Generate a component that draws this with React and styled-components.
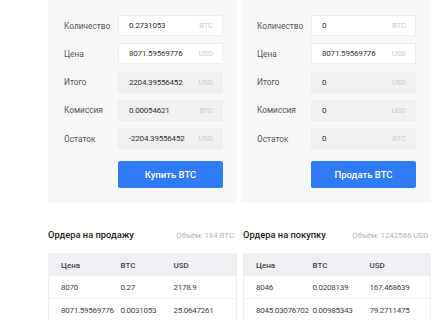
import React from "react";
import styled, { createGlobalStyle } from "styled-components";

const forms = [
  {
    button: "Купить BTC",
    fields: [
      { label: "Количество", value: "0.2731053", unit: "BTC", editable: true },
      { label: "Цена", value: "8071.59569776", unit: "USD", editable: true },
      { label: "Итого", value: "2204.39556452", unit: "USD" },
      { label: "Комиссия", value: "0.00054621", unit: "BTC" },
      { label: "Остаток", value: "-2204.39556452", unit: "USD" },
    ],
  },
  {
    button: "Продать BTC",
    fields: [
      { label: "Количество", value: "0", unit: "BTC", editable: true },
      { label: "Цена", value: "8071.59569776", unit: "USD", editable: true },
      { label: "Итого", value: "0", unit: "USD" },
      { label: "Комиссия", value: "0", unit: "USD" },
      { label: "Остаток", value: "0", unit: "BTC" },
    ],
  },
];

const books = [
  {
    title: "Ордера на продажу",
    volume: "Объём: 184 BTC",
    cols: [60, 53],
    rows: [
      ["8070", "0.27", "2178.9"],
      ["8071.59569776", "0.0031053", "25.0647261"],
    ],
  },
  {
    title: "Ордера на покупку",
    volume: "Объём: 1242586 USD",
    cols: [57, 57],
    rows: [
      ["8046", "0.0208139", "167.468639"],
      ["8045.03076702", "0.00985343", "79.2711475"],
    ],
  },
];

const App = () => {
  return (
    <>
      <GlobalStyle />
      <Page>
        <Forms>
          {forms.map((form) => (
            <Panel key={form.button}>
              {form.fields.map((f) => (
                <Field key={f.label}>
                  <Label>{f.label}</Label>
                  <InputBox $editable={f.editable}>
                    <span>{f.value}</span>
                    <Unit>{f.unit}</Unit>
                  </InputBox>
                </Field>
              ))}
              <Action>{form.button}</Action>
            </Panel>
          ))}
        </Forms>

        <Books>
          {books.map((book) => (
            <Book key={book.title}>
              <BookHead>
                <BookTitle>{book.title}</BookTitle>
                <Volume>{book.volume}</Volume>
              </BookHead>
              <Table>
                <colgroup>
                  <col style={{ width: book.cols[0] }} />
                  <col style={{ width: book.cols[1] }} />
                  <col />
                </colgroup>
                <thead>
                  <tr>
                    <Th>Цена</Th>
                    <Th>BTC</Th>
                    <Th>USD</Th>
                  </tr>
                </thead>
                <tbody>
                  {book.rows.map((r) => (
                    <tr key={r[0]}>
                      {r.map((c, i) => (
                        <Td key={i}>{c}</Td>
                      ))}
                    </tr>
                  ))}
                </tbody>
              </Table>
            </Book>
          ))}
        </Books>
      </Page>
    </>
  );
};

export default App;

const GlobalStyle = createGlobalStyle`
  body {
    margin: 0;
    background: #fff;
    font-family: Roboto, "Noto Sans", sans-serif;
    color: #333;
  }
`;

const Page = styled.div`
  width: 440px;
  height: 320px;
  overflow: hidden;
  padding-left: 48px;
  box-sizing: border-box;
`;

const Forms = styled.div`
  display: grid;
  grid-template-columns: 189px 190px;
  column-gap: 4px;
`;

const Panel = styled.div`
  background: #f7f8f9;
  padding: 15px 14px 15px 16px;
  display: flex;
  flex-direction: column;
  gap: 7.25px;
`;

const Field = styled.div`
  display: grid;
  grid-template-columns: 54px 105px;
  align-items: center;
  height: 21px;
`;

const Label = styled.div`
  font-size: 8.3px;
  color: #555;
`;

const InputBox = styled.div`
  height: 21px;
  box-sizing: border-box;
  display: flex;
  align-items: center;
  justify-content: space-between;
  padding: 0 9px 0 10px;
  font-size: 8px;
  letter-spacing: -0.2px;
  color: #333;
  background: ${(p) => (p.$editable ? "#fff" : "#eef0f2")};
  border: 1px solid ${(p) => (p.$editable ? "#eceef1" : "#eef0f2")};
`;

const Unit = styled.span`
  font-size: 7.5px;
  letter-spacing: 0;
  color: #c9ccd0;
`;

const Action = styled.button`
  margin: 5px 0 0 54px;
  width: 105px;
  height: 27px;
  border: 0;
  border-radius: 2px;
  background: #2e7bf5;
  color: #fff;
  font-family: Roboto, sans-serif;
  font-size: 9.5px;
  font-weight: 500;
`;

const Books = styled.div`
  display: grid;
  grid-template-columns: 189px 188px;
  column-gap: 6px;
  margin-top: 26px;
`;

const Book = styled.div`
  display: flex;
  flex-direction: column;
  gap: 12px;
`;

const BookHead = styled.div`
  display: flex;
  justify-content: space-between;
  align-items: baseline;
  height: 12px;
  padding-right: 3px;
`;

const BookTitle = styled.div`
  font-size: 9.3px;
  font-weight: 500;
  color: #222;
`;

const Volume = styled.div`
  font-size: 7.8px;
  color: #b3b5b8;
`;

const Table = styled.table`
  width: 100%;
  border-collapse: collapse;
  table-layout: fixed;
  border: 1px solid #eef0f2;
`;

const Th = styled.th`
  background: #eef0f3;
  height: 22px;
  padding: 0 0 0 12px;
  text-align: left;
  font-size: 8px;
  font-weight: 500;
  color: #444;
`;

const Td = styled.td`
  height: 22px;
  padding: 0 0 0 12px;
  font-size: 8px;
  letter-spacing: -0.25px;
  color: #444;
  border-bottom: 1px solid #eef0f2;
  white-space: nowrap;
`;
